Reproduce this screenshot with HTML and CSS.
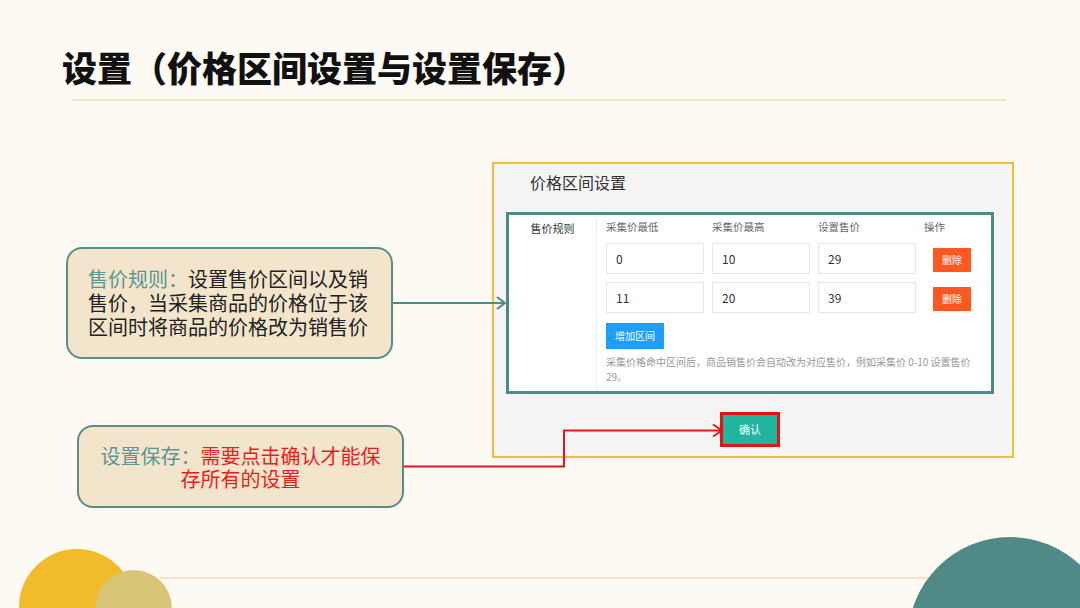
FILE: index.html
```html
<!DOCTYPE html>
<html lang="zh-CN">
<head>
    <meta charset="UTF-8">
    <meta name="viewport" content="width=device-width, initial-scale=1.0">
    <title>设置（价格区间设置与设置保存）</title>
    <link rel="stylesheet" href="styles.css">
</head>
<body>
    <div class="slide">
        <header class="slide-head">
            <h1>设置（价格区间设置与设置保存）</h1>
            <div class="head-rule"></div>
        </header>

        <!-- 截图：价格区间设置 -->
        <div class="shot">
            <div class="shot-title">价格区间设置</div>
            <div class="rule-box">
                <div class="rule-label">售价规则</div>
                <div class="rule-body">
                    <div class="rule-grid">
                        <span class="col-head">采集价最低</span>
                        <span class="col-head">采集价最高</span>
                        <span class="col-head">设置售价</span>
                        <span class="col-head">操作</span>

                        <div class="field">0</div>
                        <div class="field">10</div>
                        <div class="field">29</div>
                        <div class="cell-btn"><span class="btn btn-danger">删除</span></div>

                        <div class="field">11</div>
                        <div class="field">20</div>
                        <div class="field">39</div>
                        <div class="cell-btn"><span class="btn btn-danger">删除</span></div>
                    </div>
                    <span class="btn btn-blue">增加区间</span>
                    <p class="help">采集价格命中区间后，商品销售价会自动改为对应售价，例如采集价 0-10 设置售价 29。</p>
                </div>
            </div>
            <div class="shot-foot">
                <span class="mark"><span class="btn btn-ok">确认</span></span>
            </div>
        </div>

        <div class="callout callout-rule">
            <p><span class="key">售价规则：</span>设置售价区间以及销售价，当采集商品的价格位于该区间时将商品的价格改为销售价</p>
        </div>

        <div class="callout callout-save">
            <p><span class="key">设置保存：</span><span class="warn">需要点击确认才能保存所有的设置</span></p>
        </div>

        <!-- 连接箭头 -->
        <svg class="arrows" width="1080" height="608" viewBox="0 0 1080 608">
            <path d="M393 303 H505" fill="none" stroke="#4f8a87" stroke-width="2"/>
            <path d="M497 297 L505 303 L497 309" fill="none" stroke="#4f8a87" stroke-width="2"/>
            <path d="M404 466.5 H564 V430.5 H722" fill="none" stroke="#e8141c" stroke-width="2"/>
            <path d="M713 424.5 L722 430.5 L713 436.5" fill="none" stroke="#e8141c" stroke-width="2"/>
        </svg>

        <div class="bottom-rule"></div>
        <div class="blob blob-yellow"></div>
        <div class="blob blob-khaki"></div>
        <div class="blob blob-teal"></div>
    </div>
</body>
</html>
```

FILE: styles.css
```css
body {
    margin: 0;
    font-family: "Noto Sans CJK SC", "Noto Sans", sans-serif;
    background-color: #fdfaf3;
}

.slide {
    position: relative;
    width: 1080px;
    height: 608px;
    overflow: hidden;
    background-color: #fdfaf3;
}

.slide-head {
    padding: 46px 74px 0 62px;
}

h1 {
    margin: 0;
    font-size: 35px;
    line-height: 42px;
    font-weight: 900;
    color: #111;
}

.head-rule {
    margin: 11px 0 0 10px;
    height: 2px;
    background: #f7e6c3;
}

/* 截图区域 */
.shot {
    position: absolute;
    left: 492px;
    top: 162px;
    width: 522px;
    height: 296px;
    box-sizing: border-box;
    border: 2px solid #f0be3c;
    background: #f4f4f4;
    padding: 0 18px 0 12px;
}

.shot-title {
    height: 36px;
    line-height: 36px;
    margin: 0 0 12px 24px;
    font-size: 16px;
    color: #333;
}

.rule-box {
    display: grid;
    grid-template-columns: 88px 1fr;
    height: 182px;
    box-sizing: border-box;
    border: 3px solid #4f8a87;
    background: #fff;
}

.rule-label {
    border-right: 1px solid #eee;
    text-align: center;
    font-size: 11px;
    line-height: 24px;
    color: #333;
    padding-top: 1px;
}

.rule-body {
    padding: 0 9px 0 9px;
}

.rule-grid {
    display: grid;
    grid-template-columns: 98px 98px 98px 1fr;
    column-gap: 8px;
    row-gap: 8px;
    align-items: center;
}

.col-head {
    font-size: 10.5px;
    line-height: 24px;
    color: #666;
    margin-bottom: -4px;
}

.col-head:last-child {
    margin-left: -3px;
}

.field {
    height: 31px;
    line-height: 29px;
    box-sizing: border-box;
    border: 1px solid #e6e6e6;
    padding-left: 9px;
    font-size: 12px;
    color: #333;
}

.cell-btn {
    padding-left: 9px;
}

.btn {
    display: inline-block;
    color: #fff;
    font-size: 10px;
    text-align: center;
}

.btn-danger {
    width: 38px;
    height: 24px;
    line-height: 24px;
    background: #ff5722;
}

.btn-blue {
    margin-top: 10px;
    width: 58px;
    height: 26px;
    line-height: 26px;
    background: #1e9fff;
}

.help {
    margin: 5px 0 0;
    width: 368px;
    font-size: 10px;
    line-height: 15px;
    color: #999;
}

.shot-foot {
    display: flex;
    justify-content: center;
    margin-top: 18px;
}

.mark {
    display: inline-block;
    border: 3px solid #e3131b;
}

.btn-ok {
    display: block;
    width: 54px;
    height: 29px;
    line-height: 29px;
    font-size: 11px;
    background: #1fb59e;
}

/* 说明框 */
.callout {
    position: absolute;
    box-sizing: border-box;
    display: flex;
    align-items: center;
    border: 2px solid #5a8c88;
    border-radius: 16px;
    background: #f3e4cc;
    padding: 0 20px;
}

.callout p {
    margin: 0;
    font-size: 20px;
    line-height: 24px;
    color: #222;
}

.callout-rule {
    left: 66px;
    top: 247px;
    width: 327px;
    height: 112px;
}

.callout-save {
    left: 77px;
    top: 425px;
    width: 327px;
    height: 83px;
    text-align: center;
}

.callout-save p {
    line-height: 23px;
}

.key {
    color: #5b9793;
}

.warn {
    color: #ee1c1c;
}

.arrows {
    position: absolute;
    left: 0;
    top: 0;
}

/* 底部装饰 */
.bottom-rule {
    position: absolute;
    left: 160px;
    top: 577px;
    width: 780px;
    height: 2px;
    background: #f8e6bb;
}

.blob {
    position: absolute;
    border-radius: 50%;
}

.blob-yellow {
    left: 19px;
    top: 549px;
    width: 116px;
    height: 116px;
    background: #f2bb2c;
}

.blob-khaki {
    left: 95px;
    top: 570px;
    width: 77px;
    height: 77px;
    background: #d9c577;
}

.blob-teal {
    left: 908px;
    top: 537px;
    width: 204px;
    height: 204px;
    background: #4f8a87;
}
```
